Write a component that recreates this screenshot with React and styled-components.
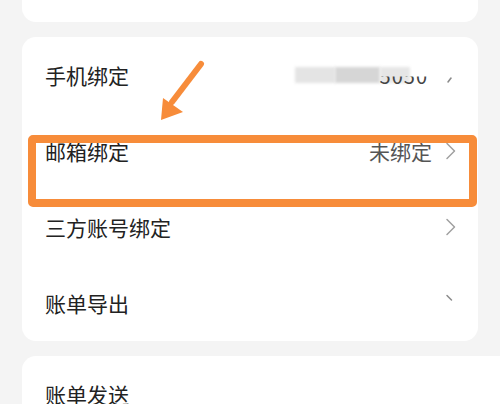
import styled, { createGlobalStyle } from "styled-components";

const GlobalStyle = createGlobalStyle`
  body {
    margin: 0;
    background: #f4f4f4;
    font-family: "Noto Sans CJK SC", "Noto Sans", sans-serif;
  }
`;

const rows = [
  { label: "手机绑定", value: "phone", chevron: "bottom" },
  { label: "邮箱绑定", value: "未绑定", chevron: "full" },
  { label: "三方账号绑定", chevron: "full" },
  { label: "账单导出", chevron: "top" },
];

export default function App() {
  return (
    <Page>
      <GlobalStyle />
      <TopCard />
      <Card>
        {rows.map((row, index) => (
          <Row key={index}>
            <Label>{row.label}</Label>
            <Right>
              {row.value === "phone" ? (
                <Blurred>
                  <BlurBlock w={40} tone="#e4e4e4" />
                  <BlurBlock w={45} tone="#d6d6d6" />
                  <BlurBlock w={30} tone="#e6e6e6" />
                  <BlurDigits>5050</BlurDigits>
                </Blurred>
              ) : (
                row.value && <Value>{row.value}</Value>
              )}
              <Chevron part={row.chevron} />
            </Right>
          </Row>
        ))}
      </Card>
      <Card wide>
        <Row>
          <Label>账单发送</Label>
        </Row>
      </Card>
      <Highlight />
      <Arrow width="60" height="70" viewBox="0 0 60 70">
        <line x1="51" y1="6" x2="22" y2="44" stroke="#f78c3a" strokeWidth="6" strokeLinecap="round" />
        <polygon points="11,62 13,40 33,54" fill="#f78c3a" />
      </Arrow>
    </Page>
  );
}

function Chevron({ part }) {
  const d =
    part === "top" ? "M2 1.5 L6.5 6" : part === "bottom" ? "M6 12 L3 16" : "M2 1.5 L9.5 9 L2 16.5";
  return (
    <ChevronSvg width="12" height="18" viewBox="0 0 12 18">
      <path d={d} fill="none" stroke={part === "full" ? "#a0a0a0" : "#8a8a8a"} strokeWidth="1.5" strokeLinecap="round" strokeLinejoin="round" />
    </ChevronSvg>
  );
}

const Page = styled.div`
  position: relative;
  width: 500px;
  height: 404px;
  overflow: hidden;
  padding-left: 22px;
  box-sizing: border-box;
  display: flex;
  flex-direction: column;
  gap: 15px;
`;

const TopCard = styled.div`
  width: 456px;
  height: 22px;
  background: #fff;
  border-radius: 0 0 14px 14px;
  flex-shrink: 0;
`;

const Card = styled.div`
  width: ${(p) => (p.wide ? "478px" : "456px")};
  background: #fff;
  border-radius: ${(p) => (p.wide ? "14px 0 0 0" : "14px")};
  flex-shrink: 0;
`;

const Row = styled.div`
  height: 76px;
  display: flex;
  align-items: center;
  justify-content: space-between;
  padding: 0 21px 0 23px;
  box-sizing: border-box;
`;

const Label = styled.div`
  font-size: 21px;
  color: #222;
`;

const Right = styled.div`
  display: flex;
  align-items: center;
  gap: 13px;
`;

const Value = styled.div`
  font-size: 21px;
  color: #555;
`;

const Blurred = styled.div`
  display: flex;
  align-items: center;
  margin-right: 4px;
`;

const BlurBlock = styled.span`
  display: block;
  width: ${(p) => p.w}px;
  height: 16px;
  background: ${(p) => p.tone};
  filter: blur(1.5px);
`;

const BlurDigits = styled.span`
  font-size: 20px;
  color: #444;
  letter-spacing: 1px;
  margin-left: -30px;
  clip-path: inset(55% 0 0 0);
`;

const ChevronSvg = styled.svg`
  display: block;
`;

const Highlight = styled.div`
  position: absolute;
  left: 28px;
  top: 135px;
  width: 449px;
  height: 72px;
  box-sizing: border-box;
  border: 8px solid #f78c3a;
  border-radius: 5px;
`;

const Arrow = styled.svg`
  position: absolute;
  left: 150px;
  top: 58px;
`;
